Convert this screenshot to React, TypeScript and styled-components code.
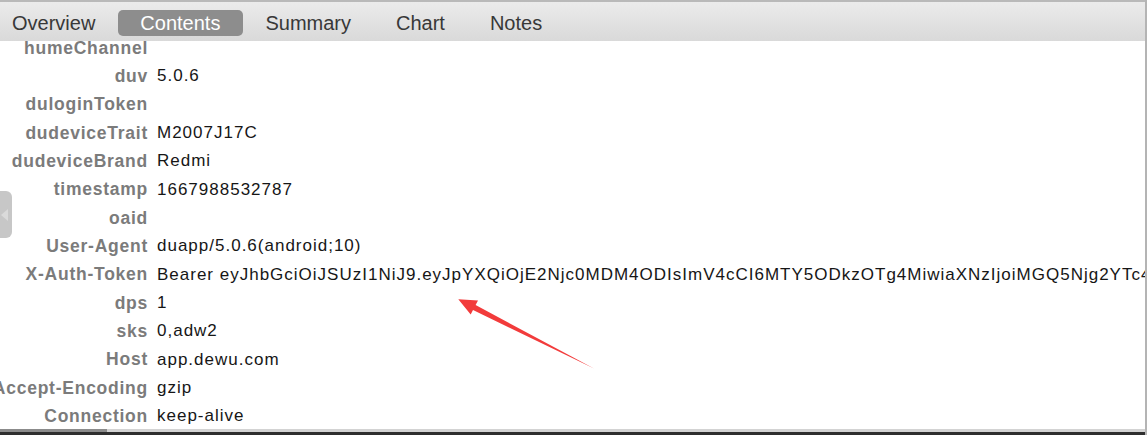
import React from 'react';
import styled, { createGlobalStyle } from 'styled-components';

const GlobalStyle = createGlobalStyle`
  html, body {
    margin: 0;
    padding: 0;
    background: #ffffff;
    overflow: hidden;
  }
  * {
    box-sizing: border-box;
  }
`;

const Window = styled.div`
  position: relative;
  width: 1147px;
  height: 435px;
  display: flex;
  flex-direction: column;
  overflow: hidden;
  background: #ffffff;
  border-right: 2px solid #b4b4b4;
  font-family: 'Liberation Sans', Arial, sans-serif;
`;

const TabBar = styled.div`
  flex: 0 0 41px;
  display: flex;
  align-items: center;
  border-top: 2px solid #b9b9b9;
  background: linear-gradient(180deg, #ebebeb 0%, #d9d9d9 100%);
`;

const Tab = styled.div<{ $active?: boolean }>`
  height: 26px;
  display: flex;
  align-items: center;
  padding: 0 22.5px;
  margin-top: 3px;
  border-radius: 5px;
  font-size: 20px;
  color: ${p => (p.$active ? '#ffffff' : '#383838')};
  background: ${p => (p.$active ? '#8d8d8d' : 'transparent')};

  &:first-child {
    margin-left: -10.5px;
  }
`;

const Body = styled.div`
  flex: 1;
  position: relative;
  overflow: hidden;
`;

const HeaderList = styled.div`
  margin-top: -7px;
  display: grid;
  grid-template-columns: 148px 1fr;
  grid-auto-rows: 28.33px;
  column-gap: 9px;
`;

const Key = styled.div`
  display: flex;
  justify-content: flex-end;
  align-items: center;
  white-space: nowrap;
  font-size: 17.5px;
  font-weight: 700;
  letter-spacing: 0.75px;
  color: #7b7b7b;
`;

const Value = styled.div`
  display: flex;
  align-items: center;
  white-space: nowrap;
  overflow: hidden;
  font-size: 17px;
  letter-spacing: 1px;
  color: #161616;
`;

const SideHandle = styled.div`
  position: absolute;
  left: 0;
  top: 150px;
  width: 12px;
  height: 47px;
  background: #c7c7c7;
  border-radius: 0 6px 6px 0;
  display: flex;
  align-items: center;
  padding-left: 1px;

  &::before {
    content: '';
    width: 0;
    height: 0;
    border-top: 6px solid transparent;
    border-bottom: 6px solid transparent;
    border-right: 7px solid #dadada;
  }
`;

const Annotation = styled.svg`
  position: absolute;
  left: 0;
  top: -41px;
  width: 1147px;
  height: 435px;
  pointer-events: none;
`;

const ScrollBar = styled.div`
  flex: 0 0 3px;
  background: #d3d3d3;
  display: flex;
`;

const ScrollThumb = styled.div`
  width: 107px;
  background: #8b8b8b;
`;

const BottomEdge = styled.div`
  flex: 0 0 3px;
  background: #2e2e2e;
`;

const tabs = ['Overview', 'Contents', 'Summary', 'Chart', 'Notes'];

const headers: [string, string][] = [
  ['humeChannel', ''],
  ['duv', '5.0.6'],
  ['duloginToken', ''],
  ['dudeviceTrait', 'M2007J17C'],
  ['dudeviceBrand', 'Redmi'],
  ['timestamp', '1667988532787'],
  ['oaid', ''],
  ['User-Agent', 'duapp/5.0.6(android;10)'],
  [
    'X-Auth-Token',
    'Bearer eyJhbGciOiJSUzI1NiJ9.eyJpYXQiOjE2Njc0MDM4ODIsImV4cCI6MTY5ODkzOTg4MiwiaXNzIjoiMGQ5Njg2YTc4ZjE0',
  ],
  ['dps', '1'],
  ['sks', '0,adw2'],
  ['Host', 'app.dewu.com'],
  ['Accept-Encoding', 'gzip'],
  ['Connection', 'keep-alive'],
];

export default function App() {
  return (
    <>
      <GlobalStyle />
      <Window>
        <TabBar>
          {tabs.map(t => (
            <Tab key={t} $active={t === 'Contents'}>
              {t}
            </Tab>
          ))}
        </TabBar>
        <Body>
          <HeaderList>
            {headers.map(([k, v]) => (
              <React.Fragment key={k}>
                <Key>{k}</Key>
                <Value>{v}</Value>
              </React.Fragment>
            ))}
          </HeaderList>
          <SideHandle />
          <Annotation viewBox="0 0 1147 435">
            <polygon
              points="458.3,299.3 478,300.4 475.6,305 594,368.5 473,310 470.7,314.6"
              fill="#f23b3b"
            />
          </Annotation>
        </Body>
        <ScrollBar>
          <ScrollThumb />
        </ScrollBar>
        <BottomEdge />
      </Window>
    </>
  );
}
